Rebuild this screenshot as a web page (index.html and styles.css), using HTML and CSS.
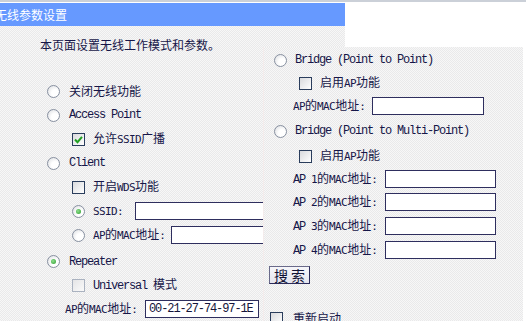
FILE: index.html
```html
<!DOCTYPE html>
<html>
<head>
<meta charset="utf-8">
<link rel="stylesheet" href="styles.css">
</head>
<body>
<div class="topline"></div>
<div class="left">
  <div class="title">无线参数设置</div>
  <div class="body">
    <div class="intro">本页面设置无线工作模式和参数。</div>
    <div class="row lv1 first"><span class="radio"></span><span class="lbl">关闭无线功能</span></div>
    <div class="row lv1"><span class="radio"></span><span class="lbl mono">Access Point</span></div>
    <div class="row lv2"><span class="check on"><svg viewBox="0 0 13 13" width="13" height="13"><polyline points="3,6.5 5.5,9.2 10,3.8" fill="none" stroke="#22a022" stroke-width="2"/></svg></span><span class="lbl">允许<span class="asc">SSID</span>广播</span></div>
    <div class="row lv1"><span class="radio"></span><span class="lbl mono">Client</span></div>
    <div class="row lv2"><span class="check"></span><span class="lbl">开启<span class="asc">WDS</span>功能</span></div>
    <div class="row lv2"><span class="radio on"></span><span class="lbl w-ssid"><span class="asc">SSID:</span></span><span class="field wide"></span></div>
    <div class="row lv2"><span class="radio"></span><span class="lbl w-mac"><span class="asc">AP</span>的<span class="asc">MAC</span>地址<span class="asc">:</span></span><span class="field wide"></span></div>
    <div class="row lv1 rep"><span class="radio on"></span><span class="lbl mono">Repeater</span></div>
    <div class="row lv2"><span class="check off"></span><span class="lbl"><span class="mono">Universal </span>模式</span></div>
    <div class="row lv0"><span class="lbl w-mac0"><span class="asc">AP</span>的<span class="asc">MAC</span>地址<span class="asc">:</span></span><span class="field val mono">00-21-27-74-97-1E</span></div>
  </div>
</div>
<div class="right">
  <div class="rrow h24 r-lv1"><span class="radio"></span><span class="lbl mono">Bridge (Point to Point)</span></div>
  <div class="rrow h22 r-lv2"><span class="check"></span><span class="lbl">启用<span class="asc">AP</span>功能</span></div>
  <div class="rrow h24 r-lab"><span class="lbl w-rmac"><span class="asc">AP</span>的<span class="asc">MAC</span>地址<span class="asc">:</span></span><span class="field f1"></span></div>
  <div class="rrow h26 r-lv1"><span class="radio"></span><span class="lbl mono">Bridge (Point to Multi-Point)</span></div>
  <div class="rrow h24 r-lv2"><span class="check"></span><span class="lbl">启用<span class="asc">AP</span>功能</span></div>
  <div class="rrow h22 r-lab"><span class="lbl w-rap"><span class="mono">AP </span><span class="asc">1</span>的<span class="asc">MAC</span>地址<span class="asc">:</span></span><span class="field f2"></span></div>
  <div class="rrow h24 r-lab"><span class="lbl w-rap"><span class="mono">AP </span><span class="asc">2</span>的<span class="asc">MAC</span>地址<span class="asc">:</span></span><span class="field f2"></span></div>
  <div class="rrow h24 r-lab"><span class="lbl w-rap"><span class="mono">AP </span><span class="asc">3</span>的<span class="asc">MAC</span>地址<span class="asc">:</span></span><span class="field f2"></span></div>
  <div class="rrow h24 r-lab"><span class="lbl w-rap"><span class="mono">AP </span><span class="asc">4</span>的<span class="asc">MAC</span>地址<span class="asc">:</span></span><span class="field f2"></span></div>
  <div class="btnrow"><span class="btn">搜 索</span></div>
  <div class="rrow h24 r-reboot"><span class="check"></span><span class="lbl">重新启动</span></div>
</div>
</body>
</html>
```
FILE: styles.css
```css
html, body {
  margin: 0;
  padding: 0;
  width: 526px;
  height: 321px;
  overflow: hidden;
  background: #ffffff;
  font-family: "Noto Sans CJK SC", "Liberation Sans", sans-serif;
  font-size: 12px;
  color: #161648;
  position: relative;
}

.topline {
  height: 2px;
  background: #cbd0d8;
  margin-bottom: 1px;
}

.left {
  width: 345px;
  overflow: hidden;
}

.title {
  height: 23px;
  line-height: 23px;
  background: #6699ff;
  color: #ffffff;
  font-size: 12px;
  text-indent: -5px;
  white-space: nowrap;
}

.body {
  height: 295px;
  padding-top: 7px;
  box-sizing: border-box;
  background: repeating-conic-gradient(#e9e9ea 0 25%, #f7f7f7 0 50%) 0 0 / 2px 2px;
}

.intro {
  height: 24px;
  line-height: 24px;
  padding-left: 40px;
}

.row {
  height: 24px;
  display: flex;
  align-items: center;
  white-space: nowrap;
}
.row.first { margin-top: 22px; }
.row.rep { margin-top: 3px; height: 23px; }
.lv1 { padding-left: 47px; }
.lv1 .lbl { margin-left: 9px; }
.lv2 { padding-left: 72px; }
.lv2 .lbl { margin-left: 8px; }
.lv0 { padding-left: 65px; }

.lbl { line-height: 14px; flex: none; white-space: pre; }
.mono {
  font-family: "Liberation Mono", "DejaVu Sans Mono", monospace;
  font-size: 12px;
  letter-spacing: -1.2px;
}
.asc {
  font-family: "DejaVu Sans Mono", "Liberation Mono", monospace;
  font-size: 11px;
  letter-spacing: -0.6px;
}

.w-ssid { width: 42px; }
.w-mac { width: 78px; }
.w-mac0 { width: 80px; }

.radio {
  flex: none;
  width: 13px;
  height: 13px;
  box-sizing: border-box;
  border: 1px solid #8790a0;
  border-radius: 50%;
  background: radial-gradient(circle at 65% 65%, #ffffff 0 35%, #d8dade 100%);
  position: relative;
}
.radio.on::after {
  content: "";
  position: absolute;
  left: 3px;
  top: 3px;
  width: 5px;
  height: 5px;
  border-radius: 50%;
  background: radial-gradient(circle at 40% 40%, #8fe08f, #2a9a2a);
}

.check {
  flex: none;
  width: 13px;
  height: 13px;
  box-sizing: border-box;
  border: 1px solid #2a3d5c;
  background: linear-gradient(135deg, #d9dadd, #ffffff);
  display: flex;
  align-items: center;
  justify-content: center;
}
.check svg { display: block; margin: -1px; }
.check.off {
  border-color: #aab2c0;
  background: linear-gradient(135deg, #e4e4e6, #fafafa);
}

.field {
  flex: none;
  display: block;
  height: 18px;
  box-sizing: border-box;
  border: 1px solid #2e2e5e;
  background: #ffffff;
}
.field.wide { width: 200px; }
.field.val {
  width: 114px;
  height: 18px;
  line-height: 16px;
  padding-left: 3px;
  color: #14143a;
  letter-spacing: -1.1px;
}

.right {
  position: absolute;
  left: 263px;
  top: 47px;
  width: 260px;
  height: 274px;
  padding-top: 1px;
  box-sizing: border-box;
  border-left: 1px solid #f4ecec;
  background: repeating-conic-gradient(#e9e9ea 0 25%, #f7f7f7 0 50%) 0 0 / 2px 2px;
}

.rrow {
  display: flex;
  align-items: center;
  white-space: nowrap;
}
.h22 { height: 22px; }
.h24 { height: 24px; }
.h26 { height: 26px; }

.r-lv1 { padding-left: 10px; }
.r-lv1 .lbl { margin-left: 8px; }
.r-lv2 { padding-left: 35px; }
.r-lv2 .lbl { margin-left: 8px; }
.r-lab { padding-left: 29px; }
.w-rmac { width: 79px; }
.w-rap { width: 92px; }
.field.f1 { width: 112px; height: 18px; }
.field.f2 { width: 111px; height: 18px; }

.btnrow {
  margin-top: 4px;
  padding-left: 5px;
  display: flex;
}
.btn {
  width: 41px;
  height: 18px;
  box-sizing: border-box;
  border: 1px solid #2a2a5a;
  border-top-color: #6a6a8a;
  border-left-color: #6a6a8a;
  background: linear-gradient(#f6f6fa, #e4e4ee);
  font-size: 14px;
  line-height: 16px;
  text-align: center;
  color: #111133;
  white-space: pre;
}

.r-reboot {
  margin-top: 22px;
  padding-left: 6px;
}
.r-reboot .lbl { margin-left: 10px; }
```
